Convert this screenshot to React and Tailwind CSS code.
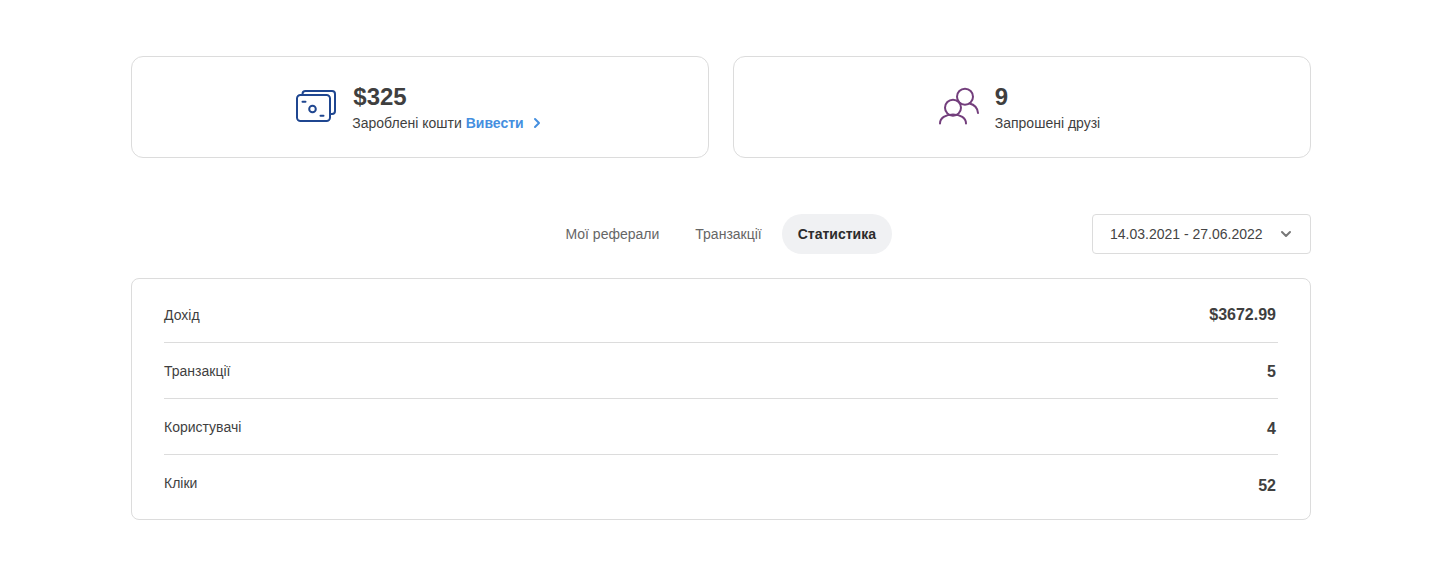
import { ChevronDown, ChevronRight } from "lucide-react";

const stats = [
  { label: "Дохід", value: "$3672.99", labelClass: "pt-[28px] pb-[19px]", valueClass: "pt-[27px] pb-[18px]" },
  { label: "Транзакції", value: "5", labelClass: "pt-[20px] pb-[19px]", valueClass: "pt-[20px] pb-[17px]" },
  { label: "Користувачі", value: "4", labelClass: "pt-[20px] pb-[19px]", valueClass: "pt-[21px] pb-[16px]" },
  { label: "Кліки", value: "52", labelClass: "pt-[20px] pb-[28px]", valueClass: "pt-[22px] pb-[24px]" },
];

function MoneyIcon() {
  return (
    <svg width="42" height="34" viewBox="0 0 42 34" fill="none" stroke="#1f4690" strokeWidth="2" strokeLinecap="round" strokeLinejoin="round">
      <path d="M7.5 5V4a3 3 0 0 1 3-3h26.5a3 3 0 0 1 3 3v17a3 3 0 0 1-3 3h-1.5" />
      <rect x="2" y="5" width="33" height="26" rx="3.5" />
      <circle cx="17.5" cy="19" r="3.3" />
      <path d="M7.5 11.7h3M25.5 25.7h3" />
    </svg>
  );
}

function FriendsIcon() {
  return (
    <svg width="42" height="40" viewBox="0 0 42 40" fill="none" stroke="#733e7c" strokeWidth="2" strokeLinecap="round">
      <circle cx="27" cy="9.7" r="8" />
      <path d="M31.5 16.5c4.5 1 8 4.5 8.5 9.5" />
      <circle cx="15" cy="20.7" r="8" />
      <path d="M2 36.5c0-5.5 5.5-9 13-9s13 3.5 13 9" />
    </svg>
  );
}

export default function App() {
  return (
    <div className="h-[575px] bg-white pl-[131px] pt-[56px] font-['Liberation_Sans',Arial,sans-serif] text-[#3f3f3f]">
      <div className="w-[1180px]">
        <div className="grid grid-cols-2 gap-6">
          <div className="flex h-[102px] items-center justify-center rounded-xl border border-[#dcdcdc]">
            <div className="flex items-center">
              <div className="mr-[15px]">
                <MoneyIcon />
              </div>
              <div className="pt-[1px]">
                <div className="pl-[1px] text-2xl leading-[28px] font-bold">$325</div>
                <div className="mt-[2px] flex items-center text-sm leading-[20px]">
                  Зароблені кошти
                  <a className="ml-1 font-bold text-[#458fdf]">Вивести</a>
                  <ChevronRight className="ml-[5px] text-[#458fdf]" size={16} strokeWidth={3} />
                </div>
              </div>
            </div>
          </div>
          <div className="flex h-[102px] items-center justify-center rounded-xl border border-[#dcdcdc]">
            <div className="flex items-center pr-[6px]">
              <div className="mr-[15px]">
                <FriendsIcon />
              </div>
              <div className="pt-[1px]">
                <div className="text-2xl leading-[28px] font-bold">9</div>
                <div className="mt-[2px] text-sm leading-[20px]">Запрошені друзі</div>
              </div>
            </div>
          </div>
        </div>

        <div className="mt-[56px] flex h-10 items-center justify-end">
          <div className="flex items-center gap-1 text-sm text-[#666666]">
            <button className="px-4 py-2.5 leading-[20px]">Мої реферали</button>
            <button className="px-4 py-2.5 leading-[20px]">Транзакції</button>
            <button className="rounded-full bg-[#f0f1f3] px-4 py-2.5 leading-[20px] font-bold text-[#2c2c2c]">Статистика</button>
          </div>
          <div className="ml-[200px] flex h-10 w-[219px] items-center justify-between rounded border border-[#dcdcdc] pr-[16px] pl-[17px] text-sm text-[#444444]">
            14.03.2021 - 27.06.2022
            <ChevronDown className="text-[#777777]" size={16} strokeWidth={3} />
          </div>
        </div>

        <div className="mt-6 rounded-lg border border-[#dcdcdc] px-[32px]">
          {stats.map((row, i) => (
            <div key={row.label} className={`flex items-start justify-between ${i < stats.length - 1 ? "border-b border-[#dcdcdc]" : ""}`}>
              <div className={`text-sm leading-[16px] ${row.labelClass}`}>{row.label}</div>
              <div className={`pr-[2px] text-base leading-[18px] font-bold ${row.valueClass}`}>{row.value}</div>
            </div>
          ))}
        </div>
      </div>
    </div>
  );
}
